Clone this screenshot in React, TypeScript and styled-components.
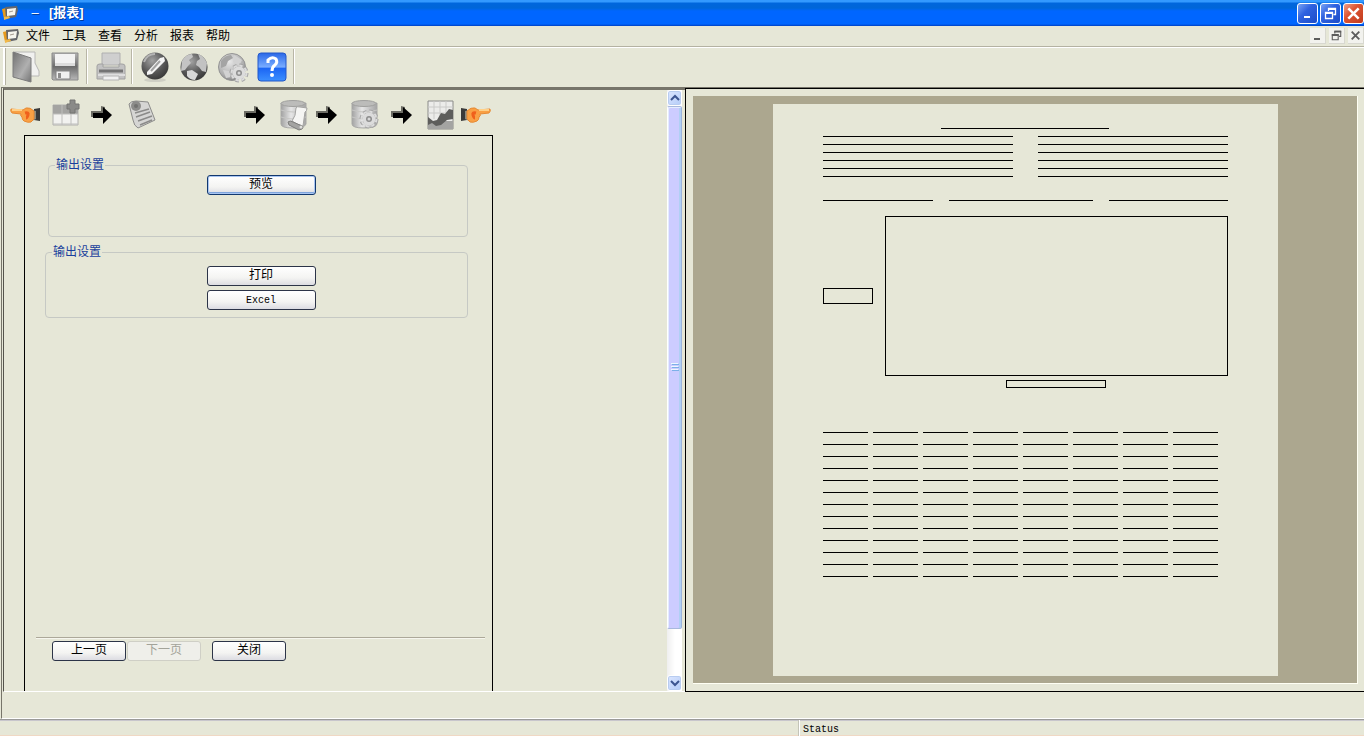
import React from 'react';
import styled, { createGlobalStyle, css } from 'styled-components';

const face = '#e6e7d7';
const desk = '#aca78f';
const ink = '#000000';

const GlobalStyle = createGlobalStyle`
  *, *::before, *::after { box-sizing: border-box; }
  html, body { margin: 0; padding: 0; }
  body {
    background: ${face};
    color: ${ink};
    font: 12px/16px "Liberation Sans", "Noto Sans CJK SC", sans-serif;
    overflow: hidden;
  }
  button { font: inherit; color: inherit; margin: 0; padding: 0; border: 0; background: none; }
  svg { display: block; }
`;

const Window = styled.div`
  display: flex;
  flex-direction: column;
  height: 100vh;
`;

/* ---------- title bar ---------- */

const TitleBar = styled.header`
  display: flex;
  align-items: center;
  flex: none;
  height: 26px;
  padding: 0 0 0 2px;
  color: #fff;
  background: linear-gradient(#3399ff 0, #3399ff 2px, #0066dd 3px, #0066d8 8px, #0066ff 11px, #0066ff 24px, #0040c0 26px);
`;

const TitleText = styled.h1`
  flex: 1;
  margin: 0 0 0 10px;
  font-size: 13px;
  line-height: 20px;
  font-weight: 700;
  white-space: nowrap;
  text-shadow: 1px 1px 0 #003a9c;
`;

const TitleDash = styled.span`
  display: inline-block;
  width: 12px;
  margin-right: 8px;
  font-weight: 400;
  text-align: center;
`;

const WindowButtons = styled.div`
  display: flex;
  gap: 2px;
`;

const CaptionButton = styled.button<{ $close?: boolean }>`
  display: grid;
  place-items: center;
  width: 21px;
  height: 21px;
  border: 1px solid #fff;
  border-radius: 3px;
  background: ${(p) =>
    p.$close
      ? 'linear-gradient(135deg, #f0a088, #dd5533 40%, #c03a1c)'
      : 'linear-gradient(135deg, #7aa4f4, #2f62e0 40%, #1c4cc8)'};
`;

/* ---------- menu bar ---------- */

const MenuBar = styled.nav`
  display: flex;
  align-items: center;
  flex: none;
  height: 21px;
  padding-left: 3px;
  border-bottom: 1px solid #b4b2a2;
`;

const MenuItem = styled.button`
  width: 36px;
  height: 20px;
  line-height: 20px;
  text-align: center;
`;

const MenuSpacer = styled.div`
  flex: 1;
`;

const ChildButtons = styled.div`
  display: flex;
  gap: 3px;
`;

const ChildButton = styled.button`
  display: grid;
  place-items: center;
  width: 16px;
  height: 16px;
  background: #f2f2ee;
  border-right: 1px solid #d8d8d0;
  border-bottom: 1px solid #d8d8d0;
`;

/* ---------- toolbar ---------- */

const Toolbar = styled.div`
  display: flex;
  align-items: center;
  flex: none;
  height: 40px;
  padding-left: 3px;
  padding-bottom: 2px;
  border-top: 1px solid #fff;
`;

const Grip = styled.div`
  width: 3px;
  height: 37px;
  border-left: 2px solid #fff;
  border-right: 1px solid #b4b2a2;
`;

const ToolButton = styled.button`
  display: grid;
  place-items: center;
  width: 39px;
  height: 36px;
`;

const ToolDivider = styled.div`
  width: 6px;
  height: 35px;
  background: linear-gradient(90deg, transparent 2px, #b8b6a6 2px, #b8b6a6 3px, #fff 3px, #fff 4px, transparent 4px);
`;

/* ---------- workspace ---------- */

const Workspace = styled.main`
  flex: 1;
  min-height: 0;
  display: flex;
  flex-direction: column;
  margin-left: 1px;
  padding-bottom: 26px;
  border-top: 1px solid #77756a;
  border-left: 1px solid #77756a;
  border-bottom: 1px solid #fff;
`;

const Panes = styled.div`
  flex: 1;
  min-height: 0;
  display: grid;
  grid-template-columns: 683fr 679fr;
`;

const WizardPane = styled.section`
  display: flex;
  min-width: 0;
  min-height: 0;
  margin-left: 1px;
  padding-right: 3px;
  border-top: 2px solid #77756a;
  border-left: 1px solid #55544c;
  border-bottom: 1px solid #fff;
`;

const WizardBody = styled.div`
  flex: 1;
  min-width: 0;
  display: flex;
  flex-direction: column;
  padding: 8px 0 0 6px;
`;

const Steps = styled.div`
  flex: none;
  display: grid;
  grid-template-columns: 42px 39px 37px 116px 36px 36px 35px 40px 36px 32px 32px;
  align-items: center;
  height: 37px;
  padding-bottom: 3px;
`;

const Frame = styled.div`
  flex: 1;
  min-height: 0;
  display: flex;
  flex-direction: column;
  width: 469px;
  margin-left: 14px;
  padding: 21px 7px 30px 11px;
  border: 1px solid ${ink};
  border-bottom: 0;
`;

const Group = styled.fieldset<{ $wide?: boolean }>`
  flex: none;
  display: flex;
  flex-direction: column;
  align-items: center;
  min-width: 0;
  width: ${(p) => (p.$wide ? 423 : 420)}px;
  height: ${(p) => (p.$wide ? 74 : 80)}px;
  margin: 0 0 7px ${(p) => (p.$wide ? 9 : 12)}px;
  padding: ${(p) => (p.$wide ? 6 : 2)}px 0 0 ${(p) => (p.$wide ? 9 : 6)}px;
  border: 1px solid #c6c9c4;
  border-radius: 4px;

  legend {
    margin-left: ${(p) => (p.$wide ? -3 : 0)}px;
    padding: 0 1px;
    line-height: 16px;
    color: #1a3f9c;
  }
`;

const PushButton = styled.button<{ $wide?: boolean; $primary?: boolean }>`
  flex: none;
  width: ${(p) => (p.$wide ? 109 : 74)}px;
  height: 20px;
  line-height: 16px;
  padding-bottom: 2px;
  border: 1px solid #2c3448;
  border-radius: 3px;
  background: linear-gradient(#ffffff, #f4f4f2 60%, #dcdce2);
  ${(p) =>
    p.$primary &&
    css`
      border-color: #12386e;
      box-shadow: inset 0 0 0 1px #a9c6f2, inset 0 -2px 0 #7ea4dc;
    `}
  &:disabled {
    color: #a3a399;
    border-color: #cfcfc6;
    background: #efefea;
  }
`;

const ButtonStack = styled.div`
  display: flex;
  flex-direction: column;
  gap: 4px;
`;

const Mono = styled.span`
  font: 10px/16px "Liberation Mono", monospace;
`;

const FrameFooter = styled.div`
  display: flex;
  gap: 1px;
  margin-top: auto;
  padding: 3px 0 0 16px;
  border-top: 1px solid #aca899;
  box-shadow: inset 0 1px 0 #f6f6ee;
`;

const FooterGap = styled.div`
  width: 9px;
`;

/* ---------- scroll bar ---------- */

const ScrollBar = styled.div`
  flex: none;
  display: flex;
  flex-direction: column;
  width: 15px;
  background: linear-gradient(90deg, #efefef, #fff 8px);
`;

const ScrollButton = styled.button`
  flex: none;
  display: grid;
  place-items: center;
  height: 16px;
  border: 1px solid #fff;
  border-radius: 3px;
  background: linear-gradient(135deg, #dce6ff, #b4ccf8);
  box-shadow: inset 0 0 0 1px #b8ccf0;
`;

const ScrollTrack = styled.div`
  flex: 1;
  min-height: 0;
  display: flex;
  flex-direction: column;
`;

const ScrollThumb = styled.div`
  flex: none;
  display: grid;
  place-items: center;
  height: 92%;
  border: 1px solid #a8b8dc;
  border-left-color: #fff;
  border-right-color: #9cb4dc;
  border-radius: 2px;
  background: #ccccff;
  box-shadow: inset 1px 1px 0 #e4ecff, inset -2px 0 0 #b0d0f4;
`;

/* ---------- preview ---------- */

const PreviewPane = styled.section`
  min-width: 0;
  min-height: 0;
  display: flex;
  padding: 7px 6px 7px 7px;
  border: 1px solid ${ink};
  border-right: 0;
`;

const Desk = styled.div`
  flex: 1;
  min-width: 0;
  display: flex;
  justify-content: center;
  padding: 8px 0 7px;
  background: ${desk};
  border-right: 1px solid #fffff4;
  border-bottom: 1px solid #fffff4;
`;

const Paper = styled.article`
  width: 505px;
  padding: 24px 50px 0;
  background: ${face};
`;

const Rule = styled.div<{ $width?: number }>`
  width: ${(p) => (p.$width ? `${p.$width}px` : 'auto')};
  height: 1px;
  background: ${ink};
`;

const Heading = styled.div`
  display: flex;
  justify-content: center;
  margin-bottom: 7px;
`;

const Spread = styled.div`
  display: flex;
  justify-content: space-between;
`;

const Lines = styled.div`
  display: flex;
  flex-direction: column;
  gap: 7px;
  width: 190px;
`;

const Signatures = styled(Spread)`
  margin: 23px 0 15px;
`;

const ChartRow = styled(Spread)`
  align-items: center;
`;

const Box = styled.div<{ $w: number; $h: number }>`
  width: ${(p) => p.$w}px;
  height: ${(p) => p.$h}px;
  border: 1px solid ${ink};
`;

const Caption = styled.div`
  display: flex;
  justify-content: center;
  width: 343px;
  margin: 4px 0 44px auto;
`;

const DataGrid = styled.div`
  display: grid;
  grid-template-columns: repeat(8, 45px);
  gap: 11px 5px;
`;

/* ---------- status bar ---------- */

const StatusBar = styled.footer`
  flex: none;
  display: grid;
  grid-template-columns: 799fr 565fr;
  height: 17px;
  border-top: 1px solid #9a9a98;
  border-bottom: 1px solid #f0d8c4;
  box-shadow: inset 0 1px 0 #c8c6cc;
`;

const StatusCell = styled.div`
  padding: 1px 0 0 3px;
  line-height: 14px;

  & + & {
    border-left: 1px solid #fff;
    box-shadow: -1px 0 0 #c4c4b8;
  }
`;

/* ---------- drawings ---------- */

const AppIcon = () => (
  <svg width="17" height="16" viewBox="1 0 17 16" aria-hidden="true">
    <path d="M1 4l4-1 1 10-3 1z" fill="#e79a1c" />
    <path d="M4 2l12-1 1 4-2 7-10 2z" fill="#66676c" />
    <path d="M6 4l9-1-1 7-8 1z" fill="#f7f5ee" />
    <path d="M8 7l4-1" stroke="#a39a90" />
    <path d="M3 12l5-1 1 2-6 2z" fill="#f1b848" />
  </svg>
);

const MinGlyph = ({ color }: { color: string }) => (
  <svg width="13" height="13" viewBox="0 0 13 13" aria-hidden="true">
    <path d="M3 10h6" stroke={color} strokeWidth="2" />
  </svg>
);

const RestoreGlyph = ({ color, size = 13 }: { color: string; size?: number }) => (
  <svg width={size} height={size} viewBox="0 0 13 13" fill="none" stroke={color} aria-hidden="true">
    <path d="M4.500 4V1.500h7v6H9.500M1.500 5.500h7v6h-7z" strokeWidth="1.300" />
    <path d="M4 2h8M1 6h8" strokeWidth="2" />
  </svg>
);

const CloseGlyph = ({ color, size = 13 }: { color: string; size?: number }) => (
  <svg width={size} height={size} viewBox="0 0 13 13" aria-hidden="true">
    <path d="M2 2l9 9M11 2l-9 9" stroke={color} strokeWidth="2.200" />
  </svg>
);

const Gradients = () => (
  <svg width="0" height="0" style={{ position: 'absolute' }} aria-hidden="true">
    <defs>
      <linearGradient id="metal" x1="0" y1="0" x2="1" y2="1">
        <stop offset="0" stopColor="#727272" />
        <stop offset=".6" stopColor="#b0b0b0" />
        <stop offset="1" stopColor="#747474" />
      </linearGradient>
      <linearGradient id="silver" x1="0" y1="0" x2="0" y2="1">
        <stop offset="0" stopColor="#b4b4b4" />
        <stop offset=".5" stopColor="#6c6c6c" />
        <stop offset="1" stopColor="#b8b8b8" />
      </linearGradient>
      <linearGradient id="drum" x1="0" y1="0" x2="1" y2="0">
        <stop offset="0" stopColor="#a2a2a2" />
        <stop offset=".4" stopColor="#e6e6e6" />
        <stop offset="1" stopColor="#a4a4a4" />
      </linearGradient>
      <radialGradient id="ball" cx=".4" cy=".3" r=".75">
        <stop offset="0" stopColor="#a2a2a2" />
        <stop offset=".6" stopColor="#565656" />
        <stop offset="1" stopColor="#363636" />
      </radialGradient>
      <radialGradient id="paleBall" cx=".4" cy=".3" r=".75">
        <stop offset="0" stopColor="#e8e8e8" />
        <stop offset=".7" stopColor="#aeaeae" />
        <stop offset="1" stopColor="#7c7c7c" />
      </radialGradient>
      <linearGradient id="blue" x1="0" y1="0" x2="0" y2="1">
        <stop offset="0" stopColor="#2a68e8" />
        <stop offset=".5" stopColor="#78acff" />
        <stop offset=".55" stopColor="#1c66f4" />
        <stop offset="1" stopColor="#3c90ff" />
      </linearGradient>
    </defs>
  </svg>
);

const FolderIcon = () => (
  <svg width="32" height="32" viewBox="0 0 32 32" aria-hidden="true">
    <path d="M4 1h21v11l4 8v5H20z" fill="#f1f1ef" stroke="#b8b8b6" />
    <path d="M3 1l18 6v24L3 26z" fill="url(#metal)" stroke="#7c7c7c" />
  </svg>
);

const FloppyIcon = () => (
  <svg width="32" height="32" viewBox="0 0 32 32" aria-hidden="true">
    <path d="M3 2h26v27H4l-1-1z" fill="url(#silver)" stroke="#8a8a8a" />
    <path d="M6 3h20v12H6z" fill="#f2f2f2" />
    <path d="M6 12h20v3H6z" fill="#dcdcdc" />
    <path d="M7 20h14v8H7z" fill="#f0f0f0" stroke="#848484" />
    <path d="M9 22h3v5H9z" fill="#8c8c8c" />
  </svg>
);

const PrinterIcon = () => (
  <svg width="32" height="32" viewBox="0 0 32 32" aria-hidden="true">
    <path d="M8 2h18v12H8z" fill="#cfcfcf" stroke="#b0b0b0" />
    <path d="M3 15q0-2 3-2h3v3h16v-3h3q3 0 3 2v13H3z" fill="#c2c2c2" stroke="#a2a2a2" />
    <path d="M5 20h24" stroke="#747474" strokeWidth="3" />
    <path d="M4 24h27" stroke="#dedede" strokeWidth="2" />
    <path d="M9 25h16v4H9z" fill="#f0f0f0" stroke="#b4b4b4" />
  </svg>
);

const PenBallIcon = () => (
  <svg width="32" height="32" viewBox="0 0 32 32" aria-hidden="true">
    <ellipse cx="16" cy="29" rx="11" ry="2" fill="#cfcfc4" />
    <circle cx="16" cy="15" r="13.500" fill="url(#ball)" />
    <path d="M8 21L21 7l4-1 1 4-13 13-5 1z" fill="#f4f4f4" />
    <path d="M12 20L21 10" stroke="#a2a2a2" strokeWidth="2" />
    <path d="M5 11q3-8 11-8" stroke="#b4b4b4" fill="none" strokeWidth="2" />
  </svg>
);

const GlobeIcon = () => (
  <svg width="32" height="32" viewBox="0 0 32 32" aria-hidden="true">
    <circle cx="16" cy="16" r="13.500" fill="url(#ball)" />
    <path d="M4 10q4-7 10-7l1 3-4 3 2 3-3 3-3 4-4 1z" fill="#c4c4c4" />
    <path d="M20 3q6 2 9 9l-1 9-4-1-3-4-3-2 1-4 3-2z" fill="#c2c2c2" />
    <path d="M9 20l5-1 6 4-3 6q-5 0-8-4z" fill="#d8d8d8" />
  </svg>
);

const Gear = ({ x, y }: { x: number; y: number }) => (
  <g transform={`translate(${x} ${y})`}>
    <circle r="7.500" fill="none" stroke="#a4a4a4" strokeWidth="4" strokeDasharray="3.400 2.490" />
    <circle r="6.500" fill="#dcdcdc" />
    <circle r="7.500" fill="none" stroke="#dcdcdc" strokeWidth="2" strokeDasharray="3.400 2.490" />
    <circle r="3" fill="#8e8e8e" />
    <circle r="1.500" fill="#d8d8d8" />
  </g>
);

const GlobeGearIcon = () => (
  <svg width="32" height="32" viewBox="0 0 32 32" aria-hidden="true">
    <circle cx="15" cy="16" r="13.500" fill="url(#paleBall)" stroke="#949494" />
    <path d="M4 10q4-6 10-6l2 3-5 3-2 5-5 2z" fill="#a4a4a4" />
    <path d="M17 4l8 5-3 6-6-4zM6 19l6 1 2 6-5 1z" fill="#d2d2d2" />
    <Gear x={22} y={22} />
  </svg>
);

const HelpIcon = () => (
  <svg width="32" height="32" viewBox="0 0 32 32" aria-hidden="true">
    <rect x="2" y="2" width="28" height="28" rx="3" fill="url(#blue)" stroke="#2458c8" />
    <path d="M12 12V9q4-4 8-1 2 3-1 6-3 2-3 6" fill="none" stroke="#fff" strokeWidth="3" />
    <circle cx="16" cy="24" r="2" fill="#fff" />
  </svg>
);

const HandIcon = ({ flip }: { flip?: boolean }) => (
  <svg width="32" height="20" viewBox="0 0 32 20" aria-hidden="true">
    <g transform={flip ? 'translate(32 0) scale(-1 1)' : undefined}>
      <path d="M24 4l6-1v13l-6-1z" fill="#3a3a3a" />
      <path d="M22 5l4 1v8l-4 2z" fill="#8b8b80" />
      <path
        d="M1 4q-1 2 1 4l9 1q-1 2 1 3 0 3 2 4 4 2 7 1l3-3V6q-4-4-8-3l-3 2z"
        fill="#f9a044"
        stroke="#e68a34"
      />
      <path d="M2 5h10" stroke="#ffd088" strokeWidth="2" />
      <path d="M15 8q4-1 3 2t-2 3" fill="none" stroke="#f0601c" strokeWidth="3" />
    </g>
  </svg>
);

const ArrowIcon = () => (
  <svg width="22" height="20" viewBox="0 0 22 20" aria-hidden="true">
    <path d="M0 6h10V1l4 1v10H0z" fill="#6c6c64" />
    <path d="M2 8h10V2l9 8-9 9v-6H2z" fill="#000" />
  </svg>
);

const GridIcon = () => (
  <svg width="28" height="32" viewBox="0 0 28 32" aria-hidden="true">
    <path d="M1 6h25v20H1z" fill="#f2f2f0" stroke="#b0b0ae" />
    <path d="M1 6h25v9H1z" fill="#a4a4a2" />
    <path d="M10 6v20M19 15v11M1 15h25M1 25h25" stroke="#bebebc" />
    <path d="M18 1h5v4h4v5h-4v4h-5v-4h-3V5h3z" fill="#8a8a88" stroke="#757572" />
  </svg>
);

const NoteIcon = () => (
  <svg width="28" height="32" viewBox="0 0 28 32" aria-hidden="true">
    <path d="M1 5q2-3 7-3l12 1 7 18-17 8q-4-2-5-8z" fill="#d6d6d4" stroke="#8c8c8a" />
    <path d="M7 14l14-4M8 18l14-5M10 22l14-5M12 26l12-5" stroke="#8b8b89" strokeWidth="1.500" />
    <circle cx="8" cy="7" r="5" fill="#8c8c8a" />
    <circle cx="8" cy="7" r="2" fill="#727270" />
  </svg>
);

const Drum = () => (
  <>
    <path d="M1 4v21q0 4 12 4t13-4V4z" fill="url(#drum)" stroke="#a8a8a6" />
    <ellipse cx="13" cy="4.500" rx="12" ry="3" fill="#bcbcba" stroke="#a0a09e" />
    <path d="M1 11q12 4 25 0M1 18q12 4 25 0" stroke="#c6c6c4" fill="none" />
  </>
);

const DrumScrollIcon = () => (
  <svg width="28" height="32" viewBox="0 0 28 32" aria-hidden="true">
    <Drum />
    <path d="M16 9q1-2 4-1l7 1q0 3-2 4l-2 14-6-2-5-3q4-5 4-13z" fill="#f5f5f3" stroke="#a4a4a2" />
    <path d="M8 23q2-2 5 0l9 4q2 1 0 3l-3 1-10-5z" fill="#a4a4a2" stroke="#7c7c7a" />
    <circle cx="21" cy="28" r="1.500" fill="#dededc" />
  </svg>
);

const DrumGearIcon = () => (
  <svg width="28" height="32" viewBox="0 0 28 32" aria-hidden="true">
    <Drum />
    <Gear x={18} y={20} />
  </svg>
);

const ChartIcon = () => (
  <svg width="28" height="32" viewBox="0 0 28 32" aria-hidden="true">
    <path d="M1 2h25v28H1z" fill="#ececea" stroke="#8a8a88" />
    <path d="M7 2v18M13 2v18M19 2v18M1 8h25M1 14h25" stroke="#cacac8" />
    <path d="M1 22h25v8H1z" fill="#a4a4a2" />
    <path d="M1 18l5 4 4-1 4-7 4 1 4-5 4 1v9l-6 1-6 5-5 1-4-3-4 2z" fill="#5e5e5c" />
  </svg>
);

const Chevron = ({ down }: { down?: boolean }) => (
  <svg width="10" height="8" viewBox="0 0 10 8" aria-hidden="true">
    <path d={down ? 'M1 2l4 4 4-4' : 'M1 6l4-4 4 4'} fill="none" stroke="#3c5490" strokeWidth="2" />
  </svg>
);

const ThumbGrip = () => (
  <svg width="8" height="10" viewBox="0 0 8 10" aria-hidden="true">
    <path d="M0 .5h7M0 3.500h7M0 6.500h7" stroke="#eef8ff" />
    <path d="M1 1.500h7M1 4.500h7M1 7.500h7" stroke="#7cb0e8" />
  </svg>
);

const menus = ['文件', '工具', '查看', '分析', '报表', '帮助'];
const count = (n: number) => Array.from({ length: n }, (_, i) => i);

export default function App() {
  return (
    <Window>
      <GlobalStyle />
      <Gradients />

      <TitleBar>
        <AppIcon />
        <TitleText>
          <TitleDash>–</TitleDash>
          [报表]
        </TitleText>
        <WindowButtons>
          <CaptionButton aria-label="最小化"><MinGlyph color="#fff" /></CaptionButton>
          <CaptionButton aria-label="还原"><RestoreGlyph color="#fff" /></CaptionButton>
          <CaptionButton aria-label="关闭" $close><CloseGlyph color="#fff" size={15} /></CaptionButton>
        </WindowButtons>
      </TitleBar>

      <MenuBar>
        <AppIcon />
        {menus.map((m) => (
          <MenuItem key={m}>{m}</MenuItem>
        ))}
        <MenuSpacer />
        <ChildButtons>
          <ChildButton aria-label="最小化"><MinGlyph color="#5c5c5c" /></ChildButton>
          <ChildButton aria-label="还原"><RestoreGlyph color="#5c5c5c" size={11} /></ChildButton>
          <ChildButton aria-label="关闭"><CloseGlyph color="#5c5c5c" size={11} /></ChildButton>
        </ChildButtons>
      </MenuBar>

      <Toolbar role="toolbar">
        <Grip />
        <ToolButton aria-label="打开"><FolderIcon /></ToolButton>
        <ToolButton aria-label="保存"><FloppyIcon /></ToolButton>
        <ToolDivider />
        <ToolButton aria-label="打印"><PrinterIcon /></ToolButton>
        <ToolDivider />
        <ToolButton aria-label="编辑"><PenBallIcon /></ToolButton>
        <ToolButton aria-label="网络"><GlobeIcon /></ToolButton>
        <ToolButton aria-label="网络设置"><GlobeGearIcon /></ToolButton>
        <ToolButton aria-label="帮助"><HelpIcon /></ToolButton>
        <ToolDivider />
      </Toolbar>

      <Workspace>
        <Panes>
          <WizardPane>
            <WizardBody>
              <Steps>
                <HandIcon />
                <GridIcon />
                <ArrowIcon />
                <NoteIcon />
                <ArrowIcon />
                <DrumScrollIcon />
                <ArrowIcon />
                <DrumGearIcon />
                <ArrowIcon />
                <ChartIcon />
                <HandIcon flip />
              </Steps>
              <Frame>
                <Group>
                  <legend>输出设置</legend>
                  <PushButton $wide $primary>预览</PushButton>
                </Group>
                <Group $wide>
                  <legend>输出设置</legend>
                  <ButtonStack>
                    <PushButton $wide>打印</PushButton>
                    <PushButton $wide><Mono>Excel</Mono></PushButton>
                  </ButtonStack>
                </Group>
                <FrameFooter>
                  <PushButton>上一页</PushButton>
                  <PushButton disabled>下一页</PushButton>
                  <FooterGap />
                  <PushButton>关闭</PushButton>
                </FrameFooter>
              </Frame>
            </WizardBody>
            <ScrollBar>
              <ScrollButton aria-label="向上滚动"><Chevron /></ScrollButton>
              <ScrollTrack>
                <ScrollThumb><ThumbGrip /></ScrollThumb>
              </ScrollTrack>
              <ScrollButton aria-label="向下滚动"><Chevron down /></ScrollButton>
            </ScrollBar>
          </WizardPane>

          <PreviewPane>
            <Desk>
              <Paper>
                <Heading><Rule $width={168} /></Heading>
                <Spread>
                  {count(2).map((c) => (
                    <Lines key={c}>
                      {count(6).map((i) => <Rule key={i} />)}
                    </Lines>
                  ))}
                </Spread>
                <Signatures>
                  <Rule $width={110} />
                  <Rule $width={144} />
                  <Rule $width={119} />
                </Signatures>
                <ChartRow>
                  <Box $w={50} $h={16} />
                  <Box $w={343} $h={160} />
                </ChartRow>
                <Caption><Box $w={100} $h={8} /></Caption>
                <DataGrid>
                  {count(104).map((i) => <Rule key={i} />)}
                </DataGrid>
              </Paper>
            </Desk>
          </PreviewPane>
        </Panes>
      </Workspace>

      <StatusBar>
        <StatusCell />
        <StatusCell><Mono>Status</Mono></StatusCell>
      </StatusBar>
    </Window>
  );
}
